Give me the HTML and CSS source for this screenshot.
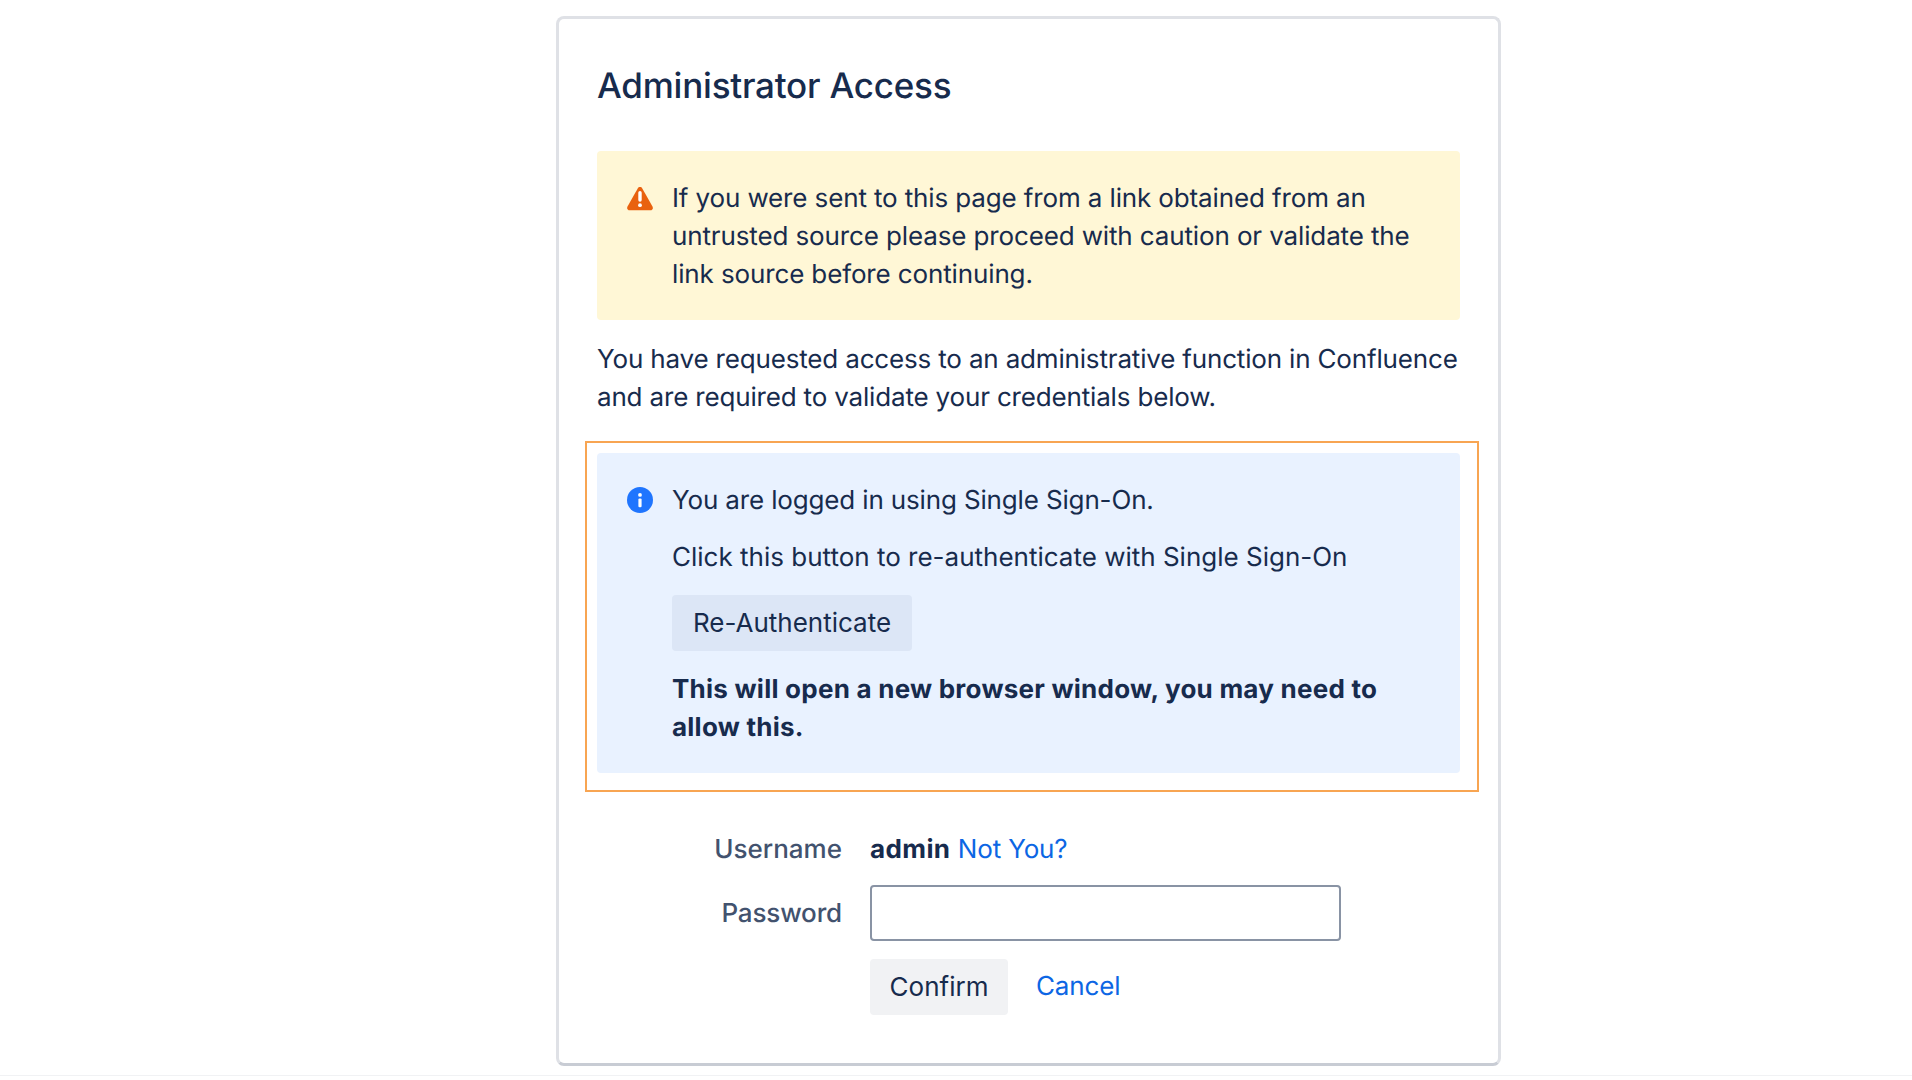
FILE: index.html
```html
<!DOCTYPE html>
<html lang="en">
<head>
<meta charset="utf-8">
<title>Administrator Access</title>
<link rel="stylesheet" href="styles.css">
</head>
<body>
<main class="page">
  <section class="card">
    <h1 class="title">Administrator Access</h1>
    <div class="message warning">
      <svg class="msg-icon" viewBox="0 0 26 24" aria-hidden="true">
        <path class="warn-fill" d="M10.7 1.4c1-1.75 3.6-1.75 4.6 0l10.2 18.2c.95 1.7-.15 3.6-2 3.6H2.5c-1.85 0-2.95-1.9-2-3.6z"/>
        <rect class="glyph" x="11.3" y="4" width="3.4" height="10.8" rx="1.7"/>
        <circle class="glyph" cx="13" cy="18.2" r="1.9"/>
      </svg>
      <div class="msg-body">
        <p>If you were sent to this page from a link obtained from an untrusted source please proceed with caution or validate the link source before continuing.</p>
      </div>
    </div>
    <p class="intro">You have requested access to an administrative function in Confluence and are required to validate your credentials below.</p>
    <div class="highlight">
      <div class="message info">
        <svg class="msg-icon" viewBox="0 0 26 26" aria-hidden="true">
          <circle class="info-fill" cx="13" cy="13" r="13"/>
          <circle class="glyph" cx="13" cy="7.9" r="1.9"/>
          <rect class="glyph" x="11.4" y="11.4" width="3.2" height="8.8" rx="1.2"/>
        </svg>
        <div class="msg-body">
          <p class="first">You are logged in using Single Sign-On.</p>
          <p class="spaced">Click this button to re-authenticate with Single Sign-On</p>
          <button class="btn btn-info" type="button">Re-Authenticate</button>
          <p class="spaced strong">This will open a new browser window, you may need to allow this.</p>
        </div>
      </div>
    </div>
    <form class="form">
      <div class="row row-user">
        <span class="label">Username</span>
        <span class="value"><strong>admin</strong> <a class="not-you" href="#">Not You?</a></span>
      </div>
      <div class="row row-pass">
        <label class="label label-pass" for="pw">Password</label>
        <input class="input" id="pw" type="password">
      </div>
      <div class="row row-actions">
        <span class="label"></span>
        <button class="btn btn-confirm" type="button">Confirm</button>
        <a class="cancel" href="#">Cancel</a>
      </div>
    </form>
  </section>
</main>
<div class="page-end"></div>
</body>
</html>
```
FILE: styles.css
```css
* { box-sizing: border-box; }
html, body { margin: 0; padding: 0; background: #fff; height: 1080px; overflow: hidden; }
body {
  font-family: Inter, "Liberation Sans", sans-serif;
  font-size: 26px;
  line-height: 38px;
  color: #172b4d;
  display: flex;
  flex-direction: column;
  text-rendering: geometricPrecision;
}
.page { padding: 16px 0 0 556px; height: 1075px; }
.card {
  width: 945px;
  height: 1050px;
  border: 3px solid #dfe1e6;
  border-bottom-color: #c8ccd4;
  border-radius: 8px;
  padding: 0 38px;
  background: #fff;
}
.title {
  margin: 0;
  padding-top: 45px;
  font-size: 35px;
  line-height: 44px;
  font-weight: 500;
  letter-spacing: -0.22px;
  color: #172b4d;
}
.message {
  display: flex;
  gap: 19px;
  border-radius: 4px;
  padding: 29px 30px 28px 30px;
}
.msg-icon { width: 26px; flex: none; display: block; }
.warning .msg-icon { height: 24px; margin-top: 7px; }
.info .msg-icon { height: 26px; margin-top: 5px; }
.warn-fill { fill: #e9620f; }
.info-fill { fill: #1f75fe; }
.glyph { fill: #fff; }
.warning { background: #fff7d6; margin-top: 43px; height: 169px; letter-spacing: -0.13px; }
.msg-body p { margin: 0; }
.intro { margin: 21px 0 0; letter-spacing: -0.17px; }
.highlight {
  margin: 24px -19px 0 -12px;
  border: 2px solid #f8a552;
  padding: 10px 17px 17px 10px;
}
.info { background: #e9f2ff; height: 320px; }
.msg-body .first { letter-spacing: -0.15px; }
.msg-body .spaced { margin-top: 19px; }
.strong { font-weight: 700; letter-spacing: 0.24px; }
.btn {
  display: block;
  height: 56px;
  border: 0;
  border-radius: 4px;
  font: inherit;
  color: #172b4d;
}
.btn-info { background: #dce6f6; width: 240px; margin-top: 18px; }
.info .msg-body .strong { margin-top: 20px; }
.row { display: flex; align-items: center; }
.label { width: 245px; flex: none; margin-right: 28px; text-align: right; color: #42526e; font-weight: 500; }
.label-pass { letter-spacing: -0.15px; padding-top: 2px; }
.row-user { margin-top: 39px; height: 38px; }
.value strong { font-weight: 700; letter-spacing: 0.4px; }
a { color: #0c66e4; text-decoration: none; }
.not-you { letter-spacing: -0.15px; }
.row-pass { margin-top: 16px; height: 56px; }
.input { width: 471px; height: 56px; border: 2px solid #8993a4; border-radius: 4px; background: #fff; }
.row-actions { margin-top: 18px; height: 56px; }
.btn-confirm { background: #f1f2f4; width: 138px; margin-right: 28px; }
.cancel { letter-spacing: -0.15px; }
.page-end { border-top: 1px solid #f1f2f4; height: 5px; }
```
